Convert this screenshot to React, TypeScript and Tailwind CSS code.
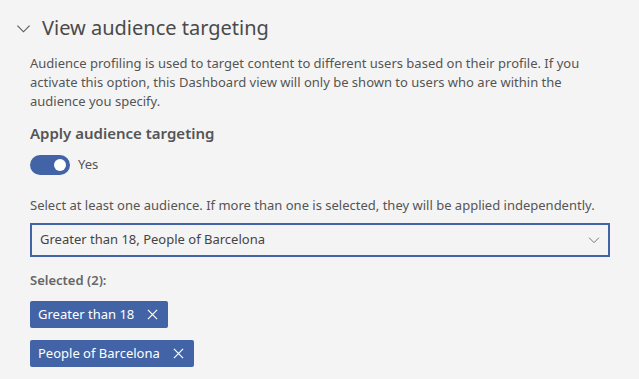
import React, { useState } from 'react';

const font = { fontFamily: '"Segoe UI", "Noto Sans", "Open Sans", sans-serif' };

const ChevronDown: React.FC<{ className?: string }> = ({ className }) => (
    <svg viewBox="0 0 16 16" className={className} fill="none" stroke="currentColor" strokeWidth="1.2">
        <path d="M1.5 5 L8 11.5 L14.5 5" />
    </svg>
);

const CloseX: React.FC<{ className?: string }> = ({ className }) => (
    <svg viewBox="0 0 12 12" className={className} fill="none" stroke="currentColor" strokeWidth="1.3">
        <path d="M1 1 L11 11 M11 1 L1 11" />
    </svg>
);

const App: React.FC = () => {
    const [enabled, setEnabled] = useState(true);
    const [selected, setSelected] = useState(['Greater than 18', 'People of Barcelona']);

    return (
        <div className="w-[639px] h-[379px] bg-[#f4f4f4] text-[#444] overflow-hidden" style={font}>
            <div className="flex items-center pt-[10px] pl-[16px] h-[46px]">
                <ChevronDown className="w-[15px] h-[15px] text-[#555]" />
                <h2 className="ml-[11px] text-[20px] text-[#4a4a4a] leading-none">View audience targeting</h2>
            </div>

            <div className="pl-[30px] pr-[20px]">
                <p className="mt-[8px] text-[13px] leading-[19px] text-[#555]">
                    Audience profiling is used to target content to different users based on their profile. If you activate this option, this Dashboard view will only be shown to users who are within the audience you specify.
                </p>

                <h3 className="mt-[11px] text-[15px] font-semibold text-[#555]">Apply audience targeting</h3>

                <div className="flex items-center mt-[10px]">
                    <button
                        onClick={() => setEnabled(!enabled)}
                        className={`w-[40px] h-[20px] rounded-full flex items-center px-[4px] ${enabled ? 'bg-[#4264a6] justify-end' : 'bg-gray-400 justify-start'}`}
                    >
                        <span className="w-[12px] h-[12px] rounded-full bg-white" />
                    </button>
                    <span className="ml-[8px] text-[13px] text-[#555]">{enabled ? 'Yes' : 'No'}</span>
                </div>

                <p className="mt-[21px] text-[13px] leading-[19px] text-[#555]">
                    Select at least one audience. If more than one is selected, they will be applied independently.
                </p>

                <div className="mt-[8px] w-[580px] h-[34px] border-2 border-[#4264a6] flex items-center justify-between pl-[8px] pr-[8px]">
                    <span className="text-[13px] text-[#444]">{selected.join(', ')}</span>
                    <ChevronDown className="w-[12px] h-[12px] text-[#666]" />
                </div>

                <p className="mt-[14px] text-[13px] font-semibold text-[#666]">Selected ({selected.length}):</p>

                <div className="flex flex-col items-start gap-[12px] mt-[11px]">
                    {selected.map(s => (
                        <div key={s} className="h-[27px] bg-[#4264a6] text-white rounded-[2px] flex items-center pl-[8px] pr-[10px] text-[13px]">
                            <span>{s}</span>
                            <button onClick={() => setSelected(selected.filter(x => x !== s))} className="ml-[13px]">
                                <CloseX className="w-[11px] h-[11px]" />
                            </button>
                        </div>
                    ))}
                </div>
            </div>
        </div>
    );
};

export default App;
